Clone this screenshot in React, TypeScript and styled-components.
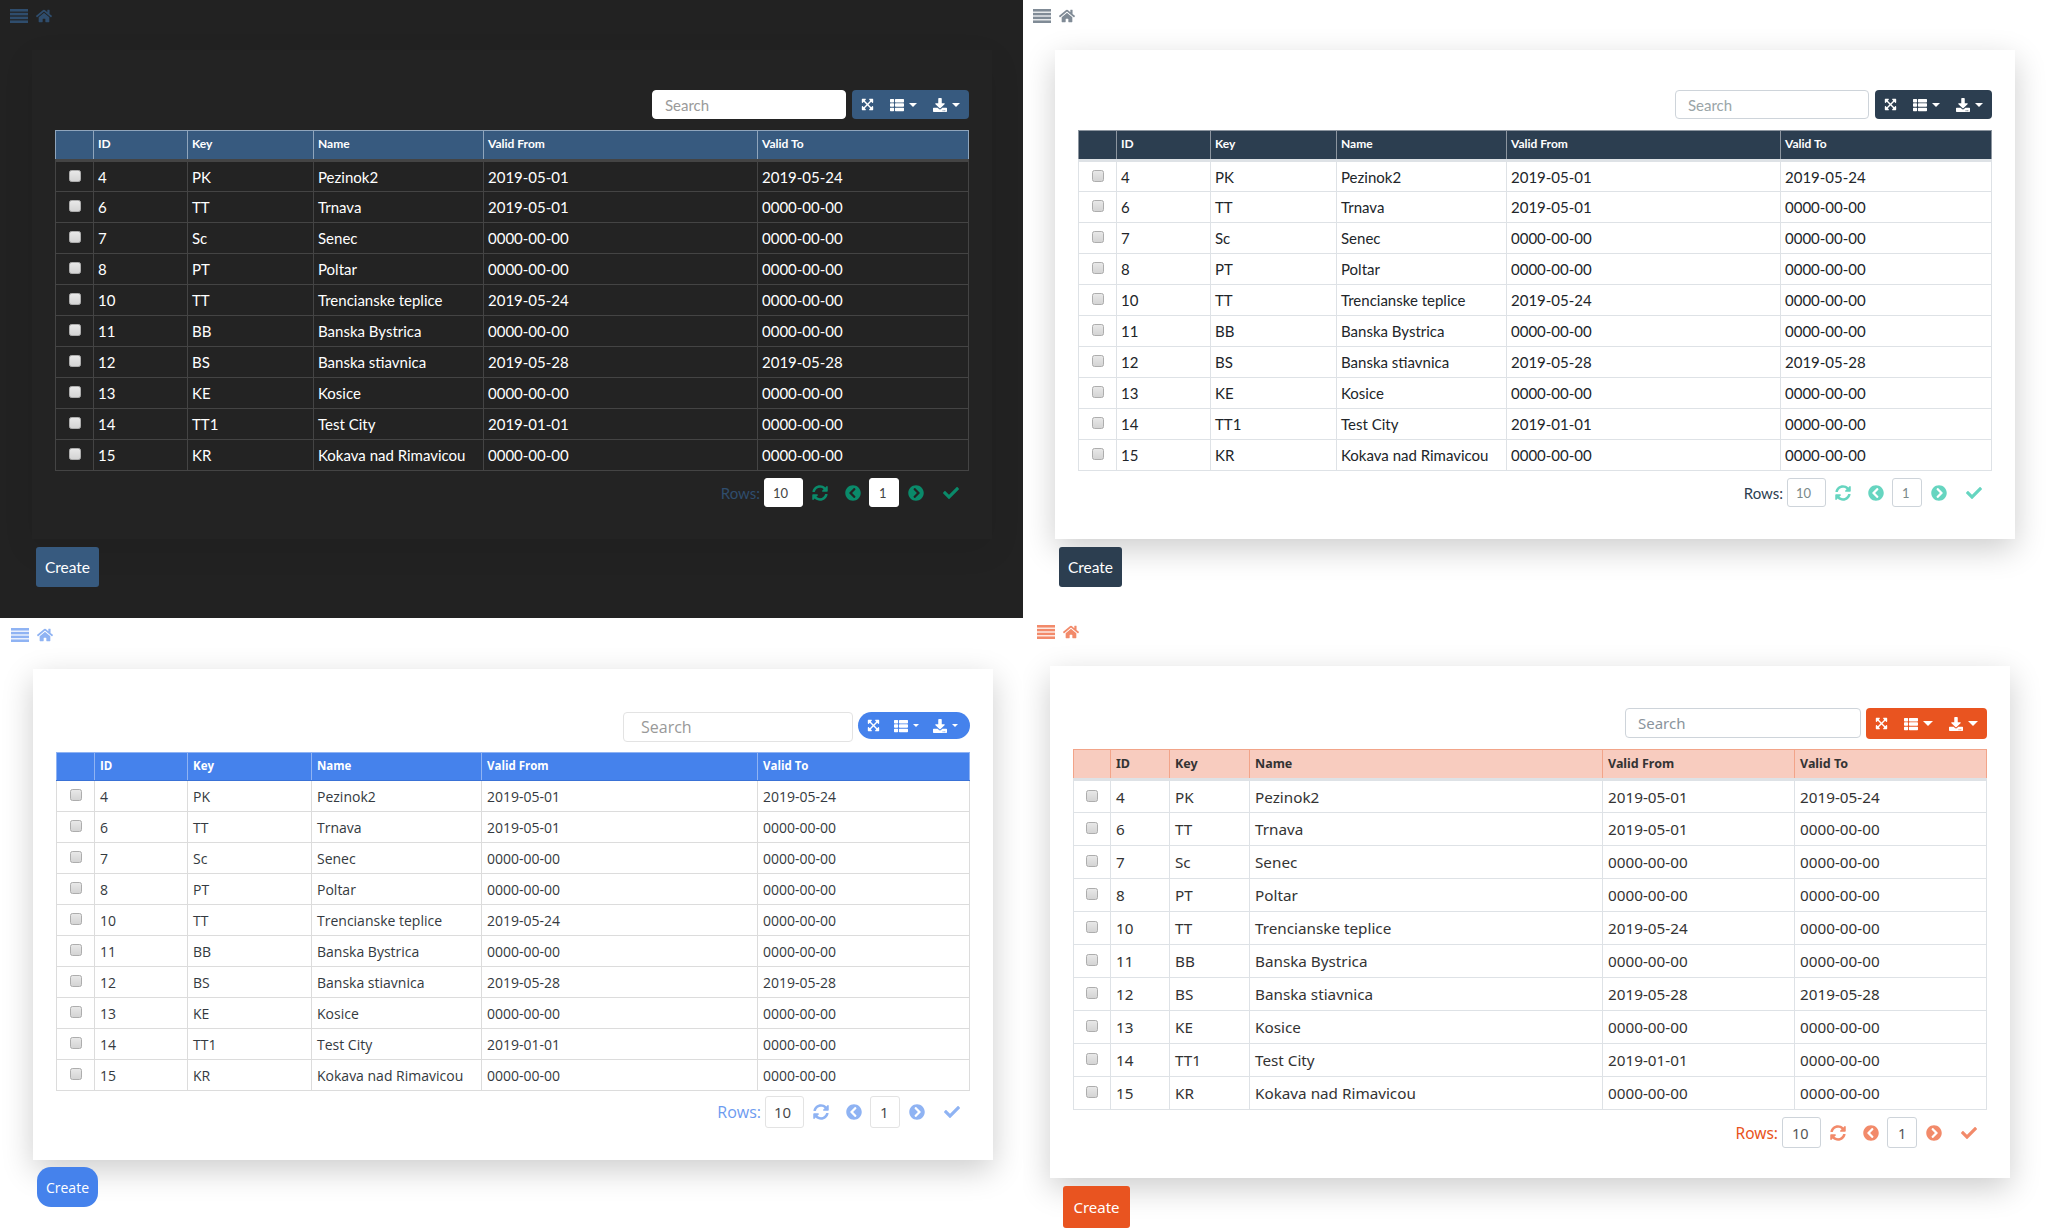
import React from "react";
import styled, { createGlobalStyle, ThemeProvider } from "styled-components";
import { FaHome, FaExpandArrowsAlt, FaThList, FaDownload, FaSyncAlt, FaChevronCircleLeft, FaChevronCircleRight, FaCheck } from "react-icons/fa";

const Global = createGlobalStyle`
  html, body { margin: 0; padding: 0; background: #fff; }
  #root { width: 2050px; height: 1232px; overflow: hidden; }
`;

const base = {
  font: '"Lato", "Liberation Sans", sans-serif', size: 15, headSize: 12, searchSize: 15, rowsSize: 15, boxSize: 13, boxPad: 0,
  page: "#fff", card: "#fff", shadow: "0 10px 30px rgba(0,0,0,.2)", text: "#212529",
  head: "#2c3e50", headText: "#fff", headBorder: "#8c959f", headBottom: "3px solid #dee2e6", headPadB: 3,
  line: "#dee2e6", navColor: "#808b96", accent: "#66d5c0", rows: "#2c3e50",
  btn: "#2c3e50", radius: 4, pillRadius: 4, search: "#fff", searchBorder: "#ced4da", placeholder: "#9aa5a8",
  inputText: "#7b8a8b", navTop: 9, navLeft: 10, navGap: 8, searchPad: 12,
  cardTop: 50, cardLeft: 32, padTop: 40, toolH: 29, searchW: 194, searchH: 29,
  toolGap: 6, tableGap: 11, headH: 30, rowH: 31, pad: 4,
  cols: [38, 94, 126, 170, 274, 211], pagerGap: 7, pagerH: 29,
  cardBottom: 32, createGap: 8, createLeft: 36, createW: 63, createH: 40, createSize: 15.5, createRadius: 3,
  groupW: 117, groupLeft: 9, groupGap: 16, caret: 4,
};

type T = typeof base;

const dark: T = { ...base, page: "#222", card: "#232323", shadow: "0 10px 30px rgba(0,0,0,.08)", text: "#fff",
  head: "#375a7f", headBorder: "#8fa5bc", headBottom: "3px solid #444", line: "#444", navColor: "#2f4d6d",
  accent: "#0a8a6a", rows: "#2f4d6d", btn: "#375a7f", searchBorder: "#fff", placeholder: "#9a9a9a", inputText: "#444" };

const flatly: T = { ...base };

const litera: T = { ...base, font: '"Open Sans", "Liberation Sans", sans-serif', size: 14, headSize: 11.5, searchSize: 16, rowsSize: 16, boxSize: 15,
  text: "#343a40", head: "#4582ec", headBorder: "#8fb3f3", headBottom: "1px solid #3a72d6", headPadB: 2, line: "#dcdcdc", navColor: "#8fb3f3",
  accent: "#8fb3f3", rows: "#6d9bf0", btn: "#4582ec", pillRadius: 14, searchBorder: "#e3e3e3", placeholder: "#999", inputText: "#444",
  navTop: 10, navLeft: 11, cardTop: 51, cardLeft: 33, padTop: 43, searchW: 230, searchH: 30, searchPad: 17, toolGap: 5, toolH: 27, tableGap: 10, headH: 28, pad: 5,
  cols: [38, 93, 124, 170, 276, 212], pagerGap: 5, pagerH: 32, createGap: 7, createLeft: 37, createW: 61, createSize: 14, createRadius: 14, groupW: 112, groupGap: 14, caret: 3.5 };

const united: T = { ...base, font: '"Noto Sans", "Liberation Sans", sans-serif', size: 15.25, headSize: 12.5, searchSize: 15, rowsSize: 15.5, boxSize: 14.5, boxPad: 1,
  text: "#333", head: "#f8ccbf", headText: "#333", headBorder: "#f2a489", headPadB: 2, navColor: "#f28a6a",
  accent: "#f28a6a", rows: "#e95420", btn: "#e95420", placeholder: "#8a949c", inputText: "#555",
  navTop: 7, navLeft: 14, cardTop: 48, cardLeft: 27, padTop: 42, searchW: 236, searchH: 30, toolGap: 5, toolH: 31, tableGap: 10, headH: 30, rowH: 33, pad: 5,
  cols: [37, 59, 80, 353, 192, 192], pagerGap: 7, pagerH: 31, cardBottom: 30, createGap: 8, createLeft: 40, createW: 67, createH: 42, createSize: 15, groupW: 121, groupGap: 16, caret: 5 };

type P = { theme: T };

const Board = styled.main`
  display: grid;
  grid-template-columns: 1023px 1027px;
  grid-template-rows: 618px 614px;
  width: 2050px;
  height: 1232px;
`;

const Pane = styled.section`
  background: ${(p: P) => p.theme.page};
  font-family: ${(p: P) => p.theme.font};
  color: ${(p: P) => p.theme.text};
  overflow: hidden;
`;

const Nav = styled.nav`
  display: flex;
  align-items: center;
  gap: ${(p: P) => p.theme.navGap}px;
  height: 14px;
  padding: ${(p: P) => p.theme.navTop}px 0 0 ${(p: P) => p.theme.navLeft}px;
  color: ${(p: P) => p.theme.navColor};
`;

const Card = styled.div`
  width: 960px;
  box-sizing: border-box;
  margin: ${(p: P) => p.theme.cardTop - p.theme.navTop - 14}px 0 0 ${(p: P) => p.theme.cardLeft}px;
  padding: ${(p: P) => p.theme.padTop}px 23px ${(p: P) => p.theme.cardBottom}px;
  background: ${(p: P) => p.theme.card};
  box-shadow: ${(p: P) => p.theme.shadow};
`;

const Toolbar = styled.div`
  display: flex;
  justify-content: flex-end;
  align-items: flex-start;
  gap: ${(p: P) => p.theme.toolGap}px;
  margin-bottom: ${(p: P) => p.theme.tableGap}px;
`;

const SearchBox = styled.span`
  box-sizing: border-box;
  display: flex;
  align-items: center;
  width: ${(p: P) => p.theme.searchW}px;
  height: ${(p: P) => p.theme.searchH}px;
  padding-left: ${(p: P) => p.theme.searchPad}px;
  background: ${(p: P) => p.theme.search};
  border: 1px solid ${(p: P) => p.theme.searchBorder};
  border-radius: 4px;
  color: ${(p: P) => p.theme.placeholder};
  font-size: ${(p: P) => p.theme.searchSize}px;
`;

const Group = styled.div`
  box-sizing: border-box;
  display: flex;
  align-items: center;
  gap: ${(p: P) => p.theme.groupGap}px;
  width: ${(p: P) => p.theme.groupW}px;
  height: ${(p: P) => p.theme.toolH}px;
  padding-left: ${(p: P) => p.theme.groupLeft}px;
  background: ${(p: P) => p.theme.btn};
  border-radius: ${(p: P) => p.theme.pillRadius}px;
  color: #fff;
`;

const ToolBtn = styled.span`
  display: inline-flex;
  align-items: center;
  gap: 5px;
`;

const Caret = styled.i`
  width: 0;
  height: 0;
  border-left: ${(p: P) => p.theme.caret}px solid transparent;
  border-right: ${(p: P) => p.theme.caret}px solid transparent;
  border-top: ${(p: P) => p.theme.caret}px solid #fff;
`;

const Table = styled.table`
  width: 913px;
  border-collapse: collapse;
  table-layout: fixed;
`;

const Th = styled.th`
  box-sizing: border-box;
  height: ${(p: P) => p.theme.headH}px;
  padding: 0 ${(p: P) => p.theme.pad}px ${(p: P) => p.theme.headPadB}px;
  background: ${(p: P) => p.theme.head};
  color: ${(p: P) => p.theme.headText};
  border: 1px solid ${(p: P) => p.theme.headBorder};
  border-bottom: ${(p: P) => p.theme.headBottom};
  font-size: ${(p: P) => p.theme.headSize}px;
  font-weight: 700;
  text-align: left;
`;

const Td = styled.td`
  box-sizing: border-box;
  height: ${(p: P) => p.theme.rowH}px;
  padding: 0 ${(p: P) => p.theme.pad}px;
  border: 1px solid ${(p: P) => p.theme.line};
  font-size: ${(p: P) => p.theme.size}px;
  white-space: nowrap;
`;

const Check = styled.span`
  display: block;
  box-sizing: border-box;
  width: 12px;
  height: 12px;
  margin: -2px auto 0;
  background: linear-gradient(#e8e8e8, #d4d4d4);
  border: 1px solid #adadad;
  border-radius: 2.5px;
`;

const Pager = styled.div`
  display: flex;
  justify-content: flex-end;
  align-items: center;
  height: ${(p: P) => p.theme.pagerH}px;
  margin-top: ${(p: P) => p.theme.pagerGap}px;
  padding-right: 10px;
`;

const RowsLabel = styled.span`
  margin-right: 4px;
  color: ${(p: P) => p.theme.rows};
  font-size: ${(p: P) => p.theme.rowsSize}px;
`;

const PageBox = styled.span<{ $w: number; $mr: number; $pl: number }>`
  box-sizing: border-box;
  display: flex;
  align-items: center;
  width: ${(p) => p.$w}px;
  height: 100%;
  margin-right: ${(p) => p.$mr}px;
  padding-left: ${(p) => p.$pl + (p.theme as T).boxPad}px;
  background: #fff;
  border: 1px solid ${(p: P) => p.theme.searchBorder};
  border-radius: 3px;
  color: ${(p: P) => p.theme.inputText};
  font-size: ${(p: P) => p.theme.boxSize}px;
`;

const PagerIcon = styled.span<{ $mr: number }>`
  display: inline-flex;
  width: 16px;
  justify-content: center;
  margin-right: ${(p) => p.$mr}px;
  color: ${(p: P) => p.theme.accent};
  font-size: 16px;
`;

const Create = styled.button`
  display: block;
  box-sizing: border-box;
  width: ${(p: P) => p.theme.createW}px;
  height: ${(p: P) => p.theme.createH}px;
  margin: ${(p: P) => p.theme.createGap}px 0 0 ${(p: P) => p.theme.createLeft}px;
  padding: 0;
  background: ${(p: P) => p.theme.btn};
  color: #fff;
  border: 0;
  border-radius: ${(p: P) => p.theme.createRadius}px;
  font-family: inherit;
  font-size: ${(p: P) => p.theme.createSize}px;
`;

const Bars = () => (
  <svg width="18" height="14" viewBox="0 0 18 14" fill="currentColor">
    <rect y="0" width="18" height="2.6" />
    <rect y="3.8" width="18" height="2.6" />
    <rect y="7.6" width="18" height="2.6" />
    <rect y="11.4" width="18" height="2.6" />
  </svg>
);

const headers = ["", "ID", "Key", "Name", "Valid From", "Valid To"];
const rows = [
  ["4", "PK", "Pezinok2", "2019-05-01", "2019-05-24"],
  ["6", "TT", "Trnava", "2019-05-01", "0000-00-00"],
  ["7", "Sc", "Senec", "0000-00-00", "0000-00-00"],
  ["8", "PT", "Poltar", "0000-00-00", "0000-00-00"],
  ["10", "TT", "Trencianske teplice", "2019-05-24", "0000-00-00"],
  ["11", "BB", "Banska Bystrica", "0000-00-00", "0000-00-00"],
  ["12", "BS", "Banska stiavnica", "2019-05-28", "2019-05-28"],
  ["13", "KE", "Kosice", "0000-00-00", "0000-00-00"],
  ["14", "TT1", "Test City", "2019-01-01", "0000-00-00"],
  ["15", "KR", "Kokava nad Rimavicou", "0000-00-00", "0000-00-00"],
];

const Panel = ({ theme }: { theme: T }) => (
  <ThemeProvider theme={theme}>
    <Pane>
      <Nav>
        <Bars />
        <FaHome size={16} />
      </Nav>
      <Card>
        <Toolbar>
          <SearchBox>Search</SearchBox>
          <Group>
            <ToolBtn><FaExpandArrowsAlt size={13} /></ToolBtn>
            <ToolBtn><FaThList size={14} /><Caret /></ToolBtn>
            <ToolBtn><FaDownload size={14} /><Caret /></ToolBtn>
          </Group>
        </Toolbar>
        <Table>
          <colgroup>
            {theme.cols.map((w, i) => <col key={i} style={{ width: w }} />)}
          </colgroup>
          <thead>
            <tr>{headers.map((h, i) => <Th key={i}>{h}</Th>)}</tr>
          </thead>
          <tbody>
            {rows.map((r) => (
              <tr key={r[0]}>
                <Td><Check /></Td>
                {r.map((c, i) => <Td key={i}>{c}</Td>)}
              </tr>
            ))}
          </tbody>
        </Table>
        <Pager>
          <RowsLabel>Rows:</RowsLabel>
          <PageBox $w={39} $mr={9} $pl={8}>10</PageBox>
          <PagerIcon $mr={17}><FaSyncAlt /></PagerIcon>
          <PagerIcon $mr={8}><FaChevronCircleLeft /></PagerIcon>
          <PageBox $w={30} $mr={9} $pl={9}>1</PageBox>
          <PagerIcon $mr={19}><FaChevronCircleRight /></PagerIcon>
          <PagerIcon $mr={0}><FaCheck /></PagerIcon>
        </Pager>
      </Card>
      <Create>Create</Create>
    </Pane>
  </ThemeProvider>
);

export default function App() {
  return (
    <>
      <Global />
      <Board>
        <Panel theme={dark} />
        <Panel theme={flatly} />
        <Panel theme={litera} />
        <Panel theme={united} />
      </Board>
    </>
  );
}
